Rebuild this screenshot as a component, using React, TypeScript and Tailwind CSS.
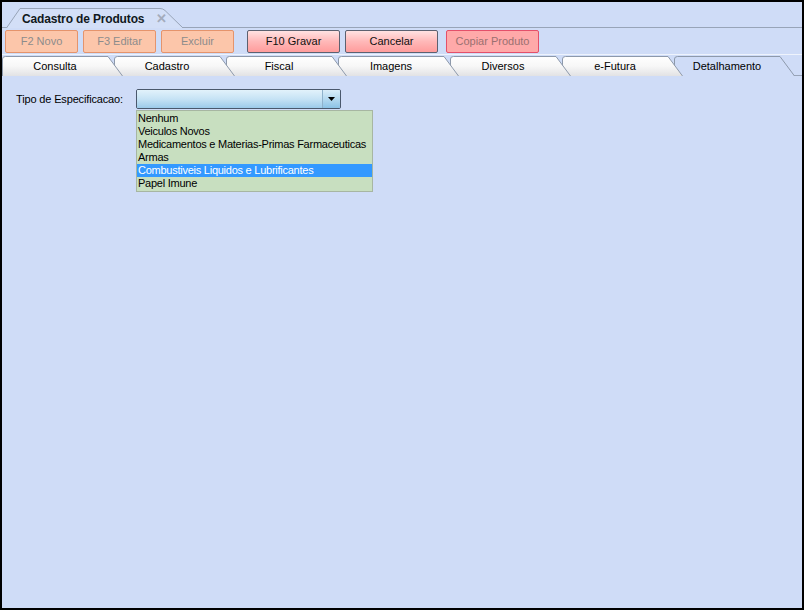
import React from 'react';

const tabs = [
  { label: 'Consulta', z: 'z-[7]' },
  { label: 'Cadastro', z: 'z-[6]' },
  { label: 'Fiscal', z: 'z-[5]' },
  { label: 'Imagens', z: 'z-[4]' },
  { label: 'Diversos', z: 'z-[3]' },
  { label: 'e-Futura', z: 'z-[2]' },
  { label: 'Detalhamento', z: 'z-[1]', active: true },
];

const options = [
  'Nenhum',
  'Veiculos Novos',
  'Medicamentos e Materias-Primas Farmaceuticas',
  'Armas',
  'Combustiveis Liquidos e Lubrificantes',
  'Papel Imune',
];

const TabShape: React.FC<{ active?: boolean }> = ({ active }) => (
  <svg className="absolute inset-0" width="121" height="21" viewBox="0 0 121 21">
    <defs>
      <linearGradient id="tabGrad" x1="0" y1="0" x2="0" y2="1">
        <stop offset="0" stopColor="#ffffff" />
        <stop offset="0.5" stopColor="#f7f7f7" />
        <stop offset="1" stopColor="#e2e2e4" />
      </linearGradient>
    </defs>
    <path
      d="M0.5 21 L0.5 4 Q0.5 1.5 3.5 1.5 L106 1.5 L120.5 21"
      fill={active ? '#cfdcf7' : 'url(#tabGrad)'}
      stroke="#8d99ab"
      strokeWidth="1"
    />
  </svg>
);

const App: React.FC = () => {
  return (
    <div className="w-[804px] h-[610px] border-2 border-black bg-[#cfdcf7] flex flex-col font-['Liberation_Sans',Arial,sans-serif] text-[11px] text-black overflow-hidden">
      {/* document tab strip */}
      <div className="h-[26px] shrink-0 border-b border-[#98a4b8] flex items-end pl-[4px]">
        <div className="relative w-[180px] h-[21px] -mb-px">
          <svg className="absolute inset-0" width="180" height="21" viewBox="0 0 180 21">
            <path
              d="M0.5 21 L14 1.5 L154 1.5 Q157 1.5 159 3.5 L177 21"
              fill="#d3dff7"
              stroke="#98a4b8"
              strokeWidth="1"
            />
          </svg>
          <div className="relative flex items-center h-full pl-[16px] pt-[2px] gap-[12px]">
            <span className="font-bold text-[12px] tracking-[-0.15px] text-[#101820]">Cadastro de Produtos</span>
            <span className="text-[#a4acbc] text-[13px] font-bold leading-none">✕</span>
          </div>
        </div>
      </div>

      {/* toolbar */}
      <div className="h-[27px] shrink-0 border-b border-[#eef3fc] flex items-center pl-[3px] text-[11px]">
        <div className="flex gap-[5px]">
          {['F2 Novo', 'F3 Editar', 'Excluir'].map((b) => (
            <button
              key={b}
              className="w-[73px] h-[23px] rounded-[2px] border border-[#e5946c] bg-[#fcc6aa] text-[#8c8c8c] flex items-center justify-center"
            >
              {b}
            </button>
          ))}
        </div>
        <div className="flex gap-[5px] ml-[13px]">
          {['F10 Gravar', 'Cancelar'].map((b) => (
            <button
              key={b}
              className="w-[93px] h-[23px] rounded-[2px] border border-[#5c6170] bg-gradient-to-b from-[#ffe2e2] via-[#ffb8b8] to-[#ff9c9c] text-[#101010] flex items-center justify-center"
            >
              {b}
            </button>
          ))}
        </div>
        <button className="ml-[8px] w-[93px] h-[23px] rounded-[2px] border border-[#e4506a] bg-[#ffa9a9] text-[#9a7070] flex items-center justify-center">
          Copiar Produto
        </button>
      </div>

      {/* page tabs */}
      <div className="h-[21px] shrink-0 flex border-b border-[#98a4b8]">
        {tabs.map((t, i) => (
          <div
            key={t.label}
            className={`relative w-[121px] h-[21px] ${i > 0 ? '-ml-[9px]' : ''} ${t.z} ${t.active ? '-mb-px h-[22px]' : ''}`}
          >
            <TabShape active={t.active} />
            <div className="relative w-[106px] h-[21px] flex items-center justify-center pt-[2px] text-[11px]">
              {t.label}
            </div>
          </div>
        ))}
      </div>

      {/* content */}
      <div className="flex-1 pt-[13px] pl-[14px]">
        <div className="flex items-start">
          <div className="w-[120px] h-[20px] flex items-center text-[11px] tracking-[-0.15px]">Tipo de Especificacao:</div>
          <div className="flex flex-col">
            <div className="w-[205px] h-[20px] rounded-[2px] border border-[#4a586c] flex overflow-hidden">
              <div className="flex-1 bg-gradient-to-b from-[#e2f2fb] via-[#c6e3f5] to-[#9ccbea]" />
              <div className="w-[18px] border-l border-[#8fb2cc] bg-gradient-to-b from-[#d9edf9] via-[#b4d9f0] to-[#8cc3e6] flex items-center justify-center">
                <svg width="7" height="4" viewBox="0 0 7 4">
                  <path d="M0 0 L7 0 L3.5 4 Z" fill="#000" />
                </svg>
              </div>
            </div>
            <div className="w-[237px] mt-px border border-[#a7b6a2] bg-[#c8dfc0] py-px">
              {options.map((o, i) => (
                <div
                  key={o}
                  className={`h-[13px] leading-[13px] pl-[1px] text-[11px] tracking-[-0.25px] whitespace-nowrap ${i === 4 ? 'bg-[#3399ff] text-white' : 'text-black'}`}
                >
                  {o}
                </div>
              ))}
            </div>
          </div>
        </div>
      </div>
    </div>
  );
};

export default App;
